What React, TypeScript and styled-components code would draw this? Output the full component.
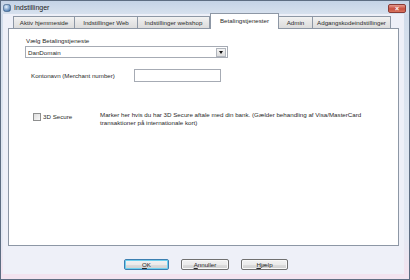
import React from "react";
import styled, { createGlobalStyle } from "styled-components";

const Global = createGlobalStyle`
  html, body { margin: 0; padding: 0; background: #ffffff; }
  body { font-family: "Liberation Sans", Arial, sans-serif; }
  * { box-sizing: border-box; }
`;

const Window = styled.div`
  width: 410px;
  height: 280px;
  border: 1px solid #5d6d82;
  background: linear-gradient(#cfdbea, #dde5f0 40%, #e4e9f3 85%, #f2e3ef 97%);
  display: flex;
  flex-direction: column;
  font-size: 6.2px;
  color: #2a2a2a;
`;

const TitleBar = styled.div`
  height: 13px;
  display: flex;
  align-items: center;
  padding: 0 3px 0 2px;
  background: linear-gradient(#c4d3e6, #d7e1ee);
`;

const TitleIcon = styled.svg`
  width: 8px;
  height: 8px;
  margin-right: 3px;
  flex: none;
`;

const TitleText = styled.span`
  font-size: 7px;
  color: #1a1a1a;
  flex: 1;
`;

const CloseButton = styled.div`
  width: 18px;
  height: 9px;
  margin-top: 2px;
  border-radius: 2px;
  border: 1px solid #8a3b36;
  background: linear-gradient(#e49a8e, #c9503f 55%, #d8745f);
  display: flex;
  align-items: center;
  justify-content: center;
  color: #fff;
  font-size: 7px;
  font-weight: bold;
  line-height: 1;
`;

const Client = styled.div`
  flex: 1;
  margin: 0 5px 5px 2px;
  background: #eef0f8;
  display: flex;
  flex-direction: column;
  padding: 0 5px;
`;

const TabStrip = styled.div`
  height: 15px;
  display: flex;
  align-items: flex-end;
  padding-left: 5px;
  position: relative;
  z-index: 1;
  margin-bottom: -1px;
`;

const Tab = styled.div<{ $w: number; $active?: boolean }>`
  width: ${(p) => p.$w}px;
  height: ${(p) => (p.$active ? 16 : 13)}px;
  margin-top: ${(p) => (p.$active ? -1 : 0)}px;
  border: 1px solid #8d97a5;
  border-left-width: ${(p) => (p.$active ? 1 : 0)}px;
  border-bottom: ${(p) => (p.$active ? "none" : "1px solid #8d97a5")};
  background: ${(p) =>
    p.$active ? "#ffffff" : "linear-gradient(#f2f2f2, #e6e6e6 50%, #dcdcdc)"};
  display: flex;
  align-items: center;
  justify-content: center;
  white-space: nowrap;
  padding-bottom: ${(p) => (p.$active ? 2 : 0)}px;
  &:first-child { border-left-width: 1px; }
`;

const Sheet = styled.div`
  height: 218px;
  background: #ffffff;
  border: 1px solid #8d97a5;
  padding: 7px 0 0 16px;
  display: flex;
  flex-direction: column;
`;

const FieldLabel = styled.div`
  height: 10px;
  line-height: 10px;
  padding-left: 1px;
`;

const Combo = styled.div`
  width: 203px;
  height: 12px;
  border: 1px solid #a6abb4;
  display: flex;
  align-items: center;
  padding: 0 1px 0 2px;
`;

const ComboText = styled.span`
  flex: 1;
`;

const ComboButton = styled.div`
  width: 10px;
  height: 9px;
  border: 1px solid #b0b5bd;
  background: linear-gradient(#f4f4f4, #dcdcdc);
  display: flex;
  align-items: center;
  justify-content: center;
`;

const Arrow = styled.div`
  width: 0;
  height: 0;
  border-left: 2.5px solid transparent;
  border-right: 2.5px solid transparent;
  border-top: 3px solid #111;
`;

const InputRow = styled.div`
  display: flex;
  align-items: center;
  margin-top: 11px;
  padding-left: 6px;
  height: 13px;
`;

const RowLabel = styled.span`
  width: 103px;
`;

const TextInput = styled.div`
  width: 87px;
  height: 13px;
  border: 1px solid #a6abb4;
  background: #fff;
`;

const SecureRow = styled.div`
  display: flex;
  align-items: flex-start;
  margin-top: 30px;
  padding-left: 8px;
`;

const CheckWrap = styled.div`
  width: 67px;
  display: flex;
  align-items: center;
  gap: 2px;
  height: 9px;
`;

const CheckBox = styled.div`
  width: 8px;
  height: 8px;
  border: 1px solid #8e8f8f;
  background: linear-gradient(135deg, #dcdcdc, #f8f8f8);
`;

const Description = styled.div`
  width: 285px;
  line-height: 8px;
  margin-top: -1px;
`;

const ButtonRow = styled.div`
  display: flex;
  gap: 12px;
  padding-left: 116px;
  margin-top: 13px;
`;

const Button = styled.div<{ $w: number; $default?: boolean }>`
  width: ${(p) => p.$w}px;
  height: 11px;
  border: 1px solid ${(p) => (p.$default ? "#3c7fb1" : "#707070")};
  border-radius: 2px;
  background: linear-gradient(#f2f2f2, #ebebeb 50%, #dddddd 51%, #cfcfcf);
  box-shadow: ${(p) => (p.$default ? "inset 0 0 0 1px #6fd0ef" : "inset 0 0 0 1px #f8f8f8")};
  display: flex;
  align-items: center;
  justify-content: center;
`;

const Accel = styled.span`
  text-decoration: underline;
`;

export default function App() {
  return (
    <>
      <Global />
      <Window>
        <TitleBar>
          <TitleIcon viewBox="0 0 8 8">
            <defs>
              <radialGradient id="g" cx="40%" cy="35%" r="70%">
                <stop offset="0" stopColor="#e8f4ff" />
                <stop offset="1" stopColor="#3d6fa8" />
              </radialGradient>
            </defs>
            <rect x="0.5" y="0.5" width="7" height="7" rx="2" fill="url(#g)" stroke="#3a5a80" strokeWidth="0.6" />
          </TitleIcon>
          <TitleText>Indstillinger</TitleText>
          <CloseButton>×</CloseButton>
        </TitleBar>
        <Client>
          <TabStrip>
            <Tab $w={62}>Aktiv hjemmeside</Tab>
            <Tab $w={63}>Indstillinger Web</Tab>
            <Tab $w={72}>Indstillinger webshop</Tab>
            <Tab $w={69} $active>Betalingstjenester</Tab>
            <Tab $w={34}>Admin</Tab>
            <Tab $w={78}>Adgangskodeindstillinger</Tab>
          </TabStrip>
          <Sheet>
            <FieldLabel>Vælg Betalingstjeneste</FieldLabel>
            <Combo>
              <ComboText>DanDomain</ComboText>
              <ComboButton>
                <Arrow />
              </ComboButton>
            </Combo>
            <InputRow>
              <RowLabel>Kontonavn (Merchant number)</RowLabel>
              <TextInput />
            </InputRow>
            <SecureRow>
              <CheckWrap>
                <CheckBox />
                <span>3D Secure</span>
              </CheckWrap>
              <Description>
                Marker her hvis du har 3D Secure aftale med din bank. (Gælder behandling af Visa/MasterCard
                transaktioner på internationale kort)
              </Description>
            </SecureRow>
          </Sheet>
          <ButtonRow>
            <Button $w={45} $default>
              <Accel>O</Accel>K
            </Button>
            <Button $w={48}>
              <Accel>A</Accel>nnuller
            </Button>
            <Button $w={47}>
              <Accel>H</Accel>jælp
            </Button>
          </ButtonRow>
        </Client>
      </Window>
    </>
  );
}
